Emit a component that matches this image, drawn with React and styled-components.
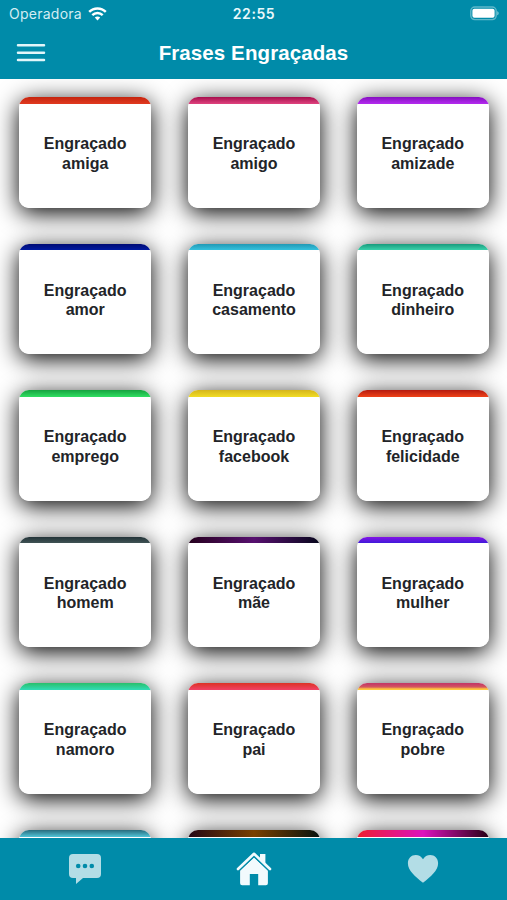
import React from "react";
import styled, { createGlobalStyle } from "styled-components";

const TEAL = "#008ba9";

const GlobalStyle = createGlobalStyle`
    * {
        box-sizing: border-box;
    }
    body {
        margin: 0;
        background: #fff;
        font-family: "Liberation Sans", Arial, sans-serif;
        overflow: hidden;
    }
`;

const Screen = styled.div`
    width: 507px;
    height: 900px;
    display: flex;
    flex-direction: column;
    overflow: hidden;
`;

const Header = styled.header`
    flex: none;
    height: 79px;
    background: ${TEAL};
    color: #fff;
`;

const Bar = styled.div`
    display: grid;
    grid-template-columns: 1fr auto 1fr;
    align-items: center;
`;

const StatusBar = styled(Bar)`
    height: 27px;
    padding: 0 8px 0 9px;
    font-family: Inter, sans-serif;
    font-size: 14px;
    line-height: 27px;
`;

const Carrier = styled.div`
    display: flex;
    align-items: center;
    gap: 6px;
    color: #d3edf3;
    letter-spacing: 0.25px;
`;

const Clock = styled.div`
    color: #e9f8fb;
    font-weight: 600;
    letter-spacing: 0.6px;
`;

const Battery = styled.svg`
    justify-self: end;
`;

const TitleBar = styled(Bar)`
    height: 52px;
    padding: 0 16px;
`;

const MenuButton = styled.button`
    width: 30px;
    height: 20px;
    padding: 0;
    border: 0;
    background: none;
    display: flex;
    svg {
        display: block;
    }
`;

const Title = styled.h1`
    margin: 0;
    padding-bottom: 1px;
    font-size: 20.5px;
    line-height: 24px;
    letter-spacing: 0.1px;
`;

const Content = styled.main`
    flex: 1;
    min-height: 0;
    overflow: hidden;
    padding: 18px 18px 0 19px;
`;

const Grid = styled.div`
    display: grid;
    grid-template-columns: repeat(3, 132.4px);
    grid-auto-rows: 110.6px;
    justify-content: space-between;
    row-gap: 36px;
`;

const Card = styled.div`
    display: flex;
    flex-direction: column;
    border-radius: 10px;
    box-shadow: 0 5px 25px #000;
    background: linear-gradient(#fff, #fff) 0 6.6px no-repeat, ${props => props.$stripe};
    padding-top: 37px;
    color: #222428;
    font-size: 16px;
    font-weight: bold;
    line-height: 19.6px;
    text-align: center;
`;

const Nav = styled.nav`
    flex: none;
    height: 61.6px;
    background: ${TEAL};
    display: grid;
    grid-template-columns: repeat(3, 1fr);
    justify-items: center;
    padding-top: 13px;
`;

const Tab = styled.div`
    height: 36px;
    color: ${props => (props.$active ? "#f2fafd" : "#b3dde6")};
    svg {
        display: block;
    }
`;

const cards = [
    ["amiga", "linear-gradient(#c5250f, #e13a20 7px)"],
    ["amigo", "linear-gradient(#a70f4d, #e0437f 7px)"],
    ["amizade", "linear-gradient(#8510c0, #b52bf0 7px)"],
    ["amor", "linear-gradient(#000b74, #001ba7 7px)"],
    ["casamento", "linear-gradient(#2299b5, #38c8e4 7px)"],
    ["dinheiro", "linear-gradient(#189b7d, #40dab2 7px)"],
    ["emprego", "linear-gradient(#16a23f, #30df62 7px)"],
    ["facebook", "linear-gradient(#d5b51b, #f1dc25 7px)"],
    ["felicidade", "linear-gradient(#b51b10, #ef4219 7px)"],
    ["homem", "linear-gradient(#233338, #445859 7px)"],
    ["mãe", "linear-gradient(90deg, #25001d, #57106f 50%, #07071c)"],
    ["mulher", "linear-gradient(#8413e5, #341bd8 7px)"],
    ["namoro", "linear-gradient(#29bf6b, #32dcb7 7px)"],
    ["pai", "linear-gradient(#dc3225, #f14265 7px)"],
    ["pobre", "linear-gradient(#c43a66 1px, #d4575e 4px, #ffc83f 6px)"]
];

// only the top edge of the next row peeks out above the tab bar
const nextRow = [
    "linear-gradient(#286b7d, #51c5d8 7px)",
    "linear-gradient(90deg, #240714, #794000 50%, #08130f)",
    "linear-gradient(90deg, #ee1e2f, #dc12bd 50%, #270014)"
];

const WifiIcon = () => (
    <svg width="19" height="14" viewBox="0 0 19 14" fill="none" stroke="#fff" strokeWidth="2.4">
        <path d="M1.2 4.9C5.7.3 13.3.3 17.8 4.9" />
        <path d="M4.3 8.1c2.9-2.9 7.5-2.9 10.4 0" />
        <path d="M6.8 10.5c1.5-1.4 3.9-1.4 5.4 0L9.5 13.5z" fill="#fff" stroke="none" />
    </svg>
);

const BatteryIcon = () => (
    <Battery width="29" height="15" viewBox="0 0 29 15">
        <rect x="0.8" y="1" width="25.4" height="12.6" rx="4" fill="none" stroke="#5fb8ca" strokeWidth="1.4" />
        <rect x="2.4" y="2.8" width="22.2" height="9" rx="2" fill="#fff" />
        <path d="M27.2 5.3c2 .8 2 3.2 0 4z" fill="#78c5d4" />
    </Battery>
);

const ChatIcon = () => (
    <svg width="34" height="34" viewBox="0 0 34 34">
        <path fill="currentColor" d="M5 3h24a4 4 0 0 1 4 4v16a4 4 0 0 1-4 4H15l-7 6v-6H5a4 4 0 0 1-4-4V7a4 4 0 0 1 4-4z" />
        <g fill={TEAL}>
            <circle cx="10.2" cy="15" r="2.3" />
            <circle cx="17" cy="15" r="2.3" />
            <circle cx="23.8" cy="15" r="2.3" />
        </g>
    </svg>
);

const HomeIcon = () => (
    <svg width="36" height="36" viewBox="0 0 36 36">
        <path fill="currentColor" d="M4.1 19.5 18 6.4l13.9 13.1v12.7a2 2 0 0 1-2 2h-7.7V23h-8.4v11.2H6.1a2 2 0 0 1-2-2z" />
        <path d="M1.8 18.6 18 3 34.2 18.6" fill="none" stroke={TEAL} strokeWidth="4.8" />
        <path fill="currentColor" d="M24 3h5.4v10L24 7.8z" />
        <path d="M2 18 18 2.8 34 18" fill="none" stroke="currentColor" strokeWidth="2.6" strokeLinecap="round" strokeLinejoin="round" />
    </svg>
);

const HeartIcon = () => (
    <svg width="32" height="34" viewBox="0 0 32 34">
        <path fill="currentColor" d="M16 31.8C8 25.3.9 19.4.9 12.2.9 7.3 4.4 4 8.7 4c3.2 0 5.7 1.5 7.3 4.2C17.6 5.5 20.1 4 23.3 4c4.3 0 7.8 3.3 7.8 8.2 0 7.2-7.1 13.1-15.1 19.6z" />
    </svg>
);

export default () => (
    <Screen>
        <GlobalStyle />
        <Header>
            <StatusBar>
                <Carrier>
                    Operadora
                    <WifiIcon />
                </Carrier>
                <Clock>22:55</Clock>
                <BatteryIcon />
            </StatusBar>
            <TitleBar>
                <MenuButton aria-label="Menu">
                    <svg width="30" height="20" viewBox="0 0 30 20" stroke="#e2f6fa" strokeWidth="2.5" strokeLinecap="round">
                        <path d="M2 2.2h26M2 9.8h26M2 17h26" />
                    </svg>
                </MenuButton>
                <Title>Frases Engraçadas</Title>
            </TitleBar>
        </Header>
        <Content>
            <Grid>
                {cards.map(([name, stripe]) => (
                    <Card key={name} $stripe={stripe}>
                        <span>Engraçado</span>
                        <span>{name}</span>
                    </Card>
                ))}
                {nextRow.map(stripe => (
                    <Card key={stripe} $stripe={stripe} />
                ))}
            </Grid>
        </Content>
        <Nav>
            <Tab><ChatIcon /></Tab>
            <Tab $active><HomeIcon /></Tab>
            <Tab><HeartIcon /></Tab>
        </Nav>
    </Screen>
);
